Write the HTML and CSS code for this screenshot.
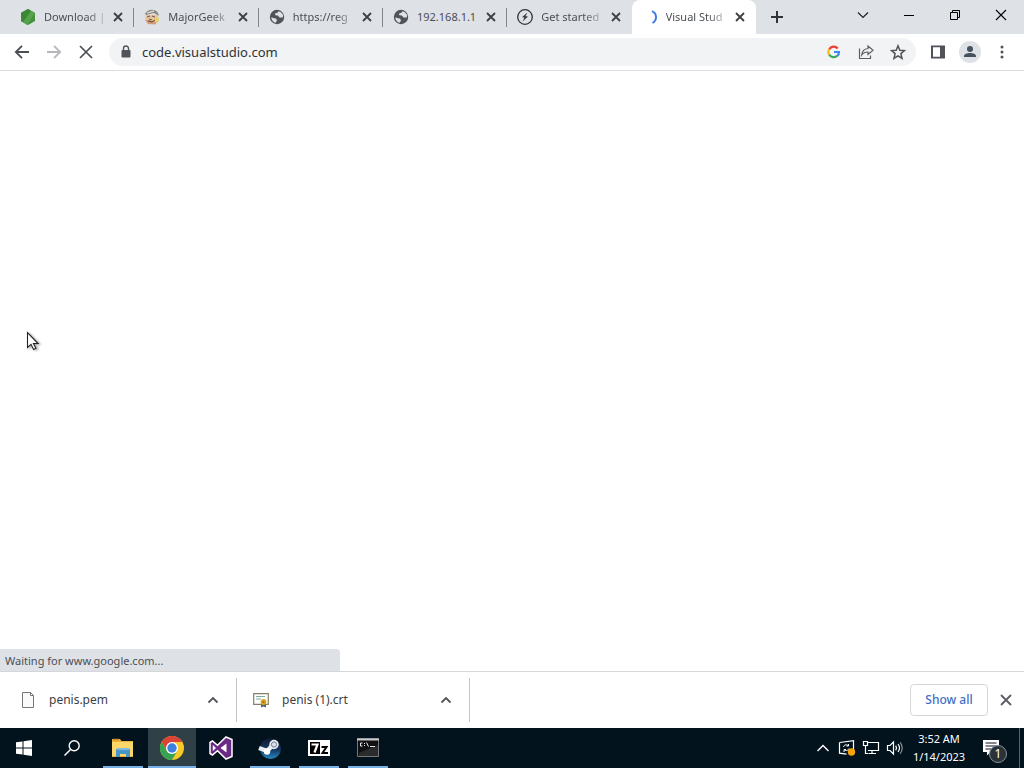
FILE: index.html
```html
<!DOCTYPE html>
<html lang="en">
<head>
<meta charset="utf-8">
<title>Visual Studio Code</title>
<link rel="stylesheet" href="styles.css">
</head>
<body>
<svg class="defs" aria-hidden="true">
  <symbol id="x" viewBox="0 0 14 14"><path d="M3 3l8 8M11 3l-8 8" fill="none" stroke="currentColor" stroke-width="1.800"/></symbol>
  <symbol id="globe" viewBox="0 0 16 16"><circle cx="8" cy="8" r="7.200" fill="#505458"/><path d="M2.300 8.300L5 9.300 7 9.600 8 11.500 6.700 13.700C4.500 13.500 2.400 11.500 2.300 8.300zM9.500 2.300l-1 1.500-2.500.7.300 1.700 2.500.3 1.700 2 3.300-.1.300-2.400C13 4.200 11.500 2.700 9.500 2.300z" fill="#dee1e6"/></symbol>
  <symbol id="up" viewBox="0 0 14 14"><path d="M2.500 9.500L7 5l4.500 4.500" fill="none" stroke="currentColor" stroke-width="1.800"/></symbol>
</svg>
<header class="browser">
  <div class="strip">
    <nav class="tabs" aria-label="Tabs">
      <div class="tab">
        <svg class="icon16" viewBox="0 0 16 16"><path d="M8 0l7 4v8l-7 4-7-4V4z" fill="#43913d"/><path d="M8 0l7 4-8 12-6-4V4z" fill="#55a34a"/><path d="M8 0l3 2-8 11-2-1V4z" fill="#3e8638"/></svg>
        <a class="label" href="#">Download |</a>
        <button class="close" aria-label="Close tab"><svg class="icon14"><use href="#x"/></svg></button>
      </div>
      <div class="tab">
        <svg class="icon16" viewBox="0 0 16 16"><path d="M2 6h11l2 6-4 3H6l-5-5z" fill="#e4c5a0"/><path d="M1 5C3 0 11-1 14 4l1 3-5-3-8 2z" fill="#8a8680"/><path d="M3 4l7-2" stroke="#d5d2cc" stroke-width="1.500"/><path d="M3 8l3-1M8 7l3 1M5 10l3 1" stroke="#765f50" stroke-width="1.200"/><path d="M1 11l3 4 7 .5 3-3-4-1z" fill="#d59a78"/><path d="M9 11l5-3 1.500 2-3 4z" fill="#e7d16c"/><path d="M4 12l4 1 3-2" fill="none" stroke="#694838"/></svg>
        <a class="label" href="#">MajorGeek</a>
        <button class="close" aria-label="Close tab"><svg class="icon14"><use href="#x"/></svg></button>
      </div>
      <div class="tab">
        <svg class="icon16"><use href="#globe"/></svg>
        <a class="label" href="#">https://reg</a>
        <button class="close" aria-label="Close tab"><svg class="icon14"><use href="#x"/></svg></button>
      </div>
      <div class="tab">
        <svg class="icon16"><use href="#globe"/></svg>
        <a class="label crisp" href="#">192.168.1.1</a>
        <button class="close" aria-label="Close tab"><svg class="icon14"><use href="#x"/></svg></button>
      </div>
      <div class="tab bare">
        <svg class="icon16" viewBox="0 0 16 16"><circle cx="8" cy="8" r="7.300" fill="none" stroke="#303438" stroke-width="1.300"/><path d="M10.500 3.500L5 8.300l2.600.2L5.500 12.500l5.500-5-2.600-.2z" fill="#303438"/></svg>
        <a class="label" href="#">Get started</a>
        <button class="close" aria-label="Close tab"><svg class="icon14"><use href="#x"/></svg></button>
      </div>
      <div class="tab active">
        <svg class="icon16" viewBox="0 0 16 16"><path d="M10 2.200C15 4.500 15.500 11 10.500 14" fill="none" stroke="#3d7be8" stroke-width="2"/></svg>
        <a class="label" href="#" aria-current="page">Visual Stud</a>
        <button class="close" aria-label="Close tab"><svg class="icon14"><use href="#x"/></svg></button>
      </div>
    </nav>
    <button class="newtab" aria-label="New tab"><svg class="icon14" viewBox="0 0 14 14"><path d="M7 1v12M1 7h12" stroke="#303338" stroke-width="2"/></svg></button>
    <div class="window">
      <button aria-label="Search tabs"><svg class="icon14" viewBox="0 0 14 14"><path d="M2 4.500l5 5 5-5" fill="none" stroke="#222" stroke-width="1.200"/></svg></button>
      <button aria-label="Minimize"><svg class="icon14" viewBox="0 0 14 14"><path d="M2 7.500h10" stroke="#000"/></svg></button>
      <button aria-label="Restore"><svg class="icon14" viewBox="0 0 14 14"><path d="M2.500 4.500h7v7h-7zM4.500 4V2.500h7v7H10" fill="none" stroke="#000"/></svg></button>
      <button aria-label="Close"><svg class="icon14" viewBox="0 0 14 14"><path d="M2 2l10 10M12 2L2 12" stroke="#000" stroke-width="1.100"/></svg></button>
    </div>
  </div>
  <div class="toolbar">
    <button class="tool" aria-label="Back"><svg class="icon16" viewBox="0 0 16 16"><path d="M15 8H2M8 1.800L1.800 8 8 14.200" fill="none" stroke="#4b4f54" stroke-width="1.800"/></svg></button>
    <button class="tool" aria-label="Forward"><svg class="icon16" viewBox="0 0 16 16"><path d="M1 8h13M8 1.800L14.200 8 8 14.200" fill="none" stroke="#b5b7ba" stroke-width="1.800"/></svg></button>
    <button class="tool" aria-label="Stop"><svg class="icon16" viewBox="0 0 16 16"><path d="M2 2l12 12M14 2L2 14" stroke="#4b4f54" stroke-width="1.700"/></svg></button>
    <div class="omnibox">
      <svg class="icon16" viewBox="0 0 16 16"><path d="M5.500 7V4.500a2.500 2.500 0 015 0V7" fill="none" stroke="#505459" stroke-width="1.400"/><rect x="3.500" y="6" width="9" height="7.500" rx="1" fill="#505459"/></svg>
      <input class="address" type="text" aria-label="Address" value="code.visualstudio.com">
      <button class="tool" aria-label="Search with Google"><svg class="icon14" viewBox="0 0 14 14"><g fill="none" stroke-width="2.200"><path d="M2.200 4.500A5 5 0 0110.700 3.500" stroke="#ea4335"/><path d="M2.200 4.300a5 5 0 000 5.400" stroke="#fbbc05"/><path d="M2.200 9.500a5 5 0 008 1.300" stroke="#34a853"/><path d="M7 7h5A5 5 0 0110.200 11" stroke="#4285f4"/></g></svg></button>
      <button class="tool" aria-label="Share"><svg class="icon16" viewBox="0 0 16 16"><path d="M1.500 4.500v10h11v-3M10 2l5 4.300-5 4.200V8C7 8 5.200 8.800 3.700 11 4 7.500 6.200 4.900 10 4.500z" fill="none" stroke="#5b5f64" stroke-width="1.200"/></svg></button>
      <button class="tool" aria-label="Bookmark"><svg class="icon16" viewBox="0 0 16 16"><path d="M8 1.800l1.800 4.400 4.700.4-3.600 3 1.100 4.700L8 11.800l-4 2.500 1.100-4.700-3.600-3 4.700-.4z" fill="none" stroke="#505459" stroke-width="1.500"/></svg></button>
    </div>
    <button class="tool" aria-label="Side panel"><svg class="icon16" viewBox="0 0 16 16"><path d="M1 1.500h14v13H1zM3 3.300v9.400h7V3.300z" fill="#505459" fill-rule="evenodd"/></svg></button>
    <button class="tool" aria-label="Profile"><svg class="icon22" viewBox="0 0 22 22"><circle cx="11" cy="11" r="11" fill="#dee1e6"/><circle cx="11" cy="8" r="3" fill="#46515e"/><path d="M5 16v-1c0-4 12-4 12 0v1z" fill="#46515e"/></svg></button>
    <button class="tool" aria-label="Menu"><svg class="icon16" viewBox="0 0 16 16"><g fill="#505459"><circle cx="8" cy="3" r="1.500"/><circle cx="8" cy="8" r="1.500"/><circle cx="8" cy="13" r="1.500"/></g></svg></button>
  </div>
</header>
<main class="page">
  <svg class="pointer" viewBox="0 0 14 20" aria-hidden="true"><path d="M1.500 1.500v15l3.500-3.200 2.600 5.200 2.300-1.200-2.500-4.800h4.700z" fill="#fff" stroke="#222" stroke-width="1.100"/></svg>
  <div class="status" role="status">Waiting for www.google.com...</div>
</main>
<section class="shelf" aria-label="Downloads">
  <div class="item">
    <svg class="icon16" viewBox="0 0 16 16"><path d="M2.500.5h8l3 3v12h-11zM10.500.5v3h3" fill="#fafafa" stroke="#777"/></svg>
    <a class="file" href="#">penis.pem</a>
    <button class="more" aria-label="Options for penis.pem"><svg class="icon14"><use href="#up"/></svg></button>
  </div>
  <div class="item">
    <svg class="icon16" viewBox="0 0 16 16"><path d="M.7 1.700h14.600v10.600H.7z" fill="#fff" stroke="#8a7f65" stroke-width="1.200"/><path d="M3 4.500h9M3 7h5" stroke="#7eaaa0"/><path d="M8 11v4.500l2.500-1 2.500 1V11" fill="#536273"/><circle cx="10.500" cy="10" r="2.900" fill="#dda51e"/><circle cx="10.500" cy="10" r="1" fill="#9e6e10"/></svg>
    <a class="file" href="#">penis (1).crt</a>
    <button class="more" aria-label="Options for penis (1).crt"><svg class="icon14"><use href="#up"/></svg></button>
  </div>
  <div class="shelfend">
    <button class="showall">Show all</button>
    <button class="dismiss" aria-label="Close downloads"><svg class="icon16" viewBox="0 0 16 16"><path d="M3 3l10 10M13 3L3 13" stroke="#5a5d61" stroke-width="1.800"/></svg></button>
  </div>
</section>
<footer class="taskbar">
  <div class="system">
    <button class="task" aria-label="Start"><svg class="icon16" viewBox="0 0 16 16"><path d="M0 2.300L6.500 1.400v6.100H0zM7.500 1.200L16 0v7.500H7.500zM0 8.500h6.500v6.100L0 13.700zM7.500 8.500H16V16l-8.500-1.200z" fill="#fff"/></svg></button>
    <button class="task" aria-label="Search"><svg class="icon16" viewBox="0 0 16 16"><circle cx="10.200" cy="5.800" r="5" fill="none" stroke="#fff" stroke-width="1.400"/><path d="M6.500 9.500L.5 15.500" stroke="#fff" stroke-width="1.500"/></svg></button>
  </div>
  <nav class="apps" aria-label="Applications">
    <button class="task open" aria-label="File Explorer"><svg class="icon24" viewBox="0 0 24 24"><path d="M1 3h8l1.500 2H22v16H1z" fill="#e9b23c"/><path d="M1 6h21v14H1z" fill="#fbd769"/><path d="M2 3.500h6" stroke="#c98a25" stroke-width="1.500"/><path d="M5 21v-8h14v8h-4v-3H9v3z" fill="#4a94c8"/><path d="M6 13h12" stroke="#7bbbe0" stroke-width="2"/></svg></button>
    <button class="task open current" aria-label="Google Chrome"><svg class="icon24" viewBox="0 0 24 24"><circle cx="12" cy="12" r="12" fill="#f6c927"/><path d="M1.600 6A12 12 0 0122.400 6H12L7 15z" fill="#dc4337"/><path d="M1.600 6A12 12 0 0012 24l5.200-9-5.200 3-5.200-3z" fill="#35a452"/><circle cx="12" cy="12" r="6" fill="#fff"/><circle cx="12" cy="12" r="4.700" fill="#3e7fe2"/></svg></button>
    <button class="task" aria-label="Visual Studio"><svg class="icon24" viewBox="0 0 24 24"><path d="M17 1l6 2.500v17L17 23 8.500 14.800 3.500 19 1 17.500v-11L3.500 5l5 4.200z" fill="#682a84" stroke="#fff" stroke-width="1.500"/><path d="M3.800 9v6L7 12zM17.500 7.500v9L11.500 12z" fill="#fff"/></svg></button>
    <button class="task open" aria-label="Steam"><svg class="icon24" viewBox="0 0 24 24"><defs><linearGradient id="steam" x2="0" y2="1"><stop stop-color="#10192e"/><stop offset=".55" stop-color="#143762"/><stop offset="1" stop-color="#288ac2"/></linearGradient></defs><circle cx="12.500" cy="12.500" r="10.500" fill="url(#steam)"/><path d="M1 12l8 3 6-6" fill="none" stroke="#e8ecf0" stroke-width="4.500"/><circle cx="16" cy="8.500" r="4.700" fill="#e8ecf0"/><circle cx="16" cy="8.500" r="2.600" fill="#dce2e7" stroke="#6b7d92"/><circle cx="9" cy="15.500" r="3.200" fill="#fff"/></svg></button>
    <button class="task open" aria-label="7-Zip"><svg class="icon24" viewBox="0 0 24 24"><path d="M1 4h22v16H1z" fill="#fff"/><path d="M3 6h10v12H3z" fill="#000"/><path d="M4.500 8.500h6L7.500 16.500" fill="none" stroke="#fff" stroke-width="2.200"/><path d="M14.500 11h5l-4 6h5.500" fill="none" stroke="#000" stroke-width="2"/></svg></button>
    <button class="task open" aria-label="Command Prompt"><svg class="icon24" viewBox="0 0 24 24"><path d="M1.500 2.500h21v18h-21z" fill="#101112" stroke="#777"/><path d="M1 3.500h22" stroke="#c7c9ca" stroke-width="2"/><path d="M3 17L22 9v11H3z" fill="#292b2d"/><path d="M6.500 7H4.500v3h2M8 7.500h1M8 9.500h1M10.500 6.500l2 4M14 10.500h5" fill="none" stroke="#e5e5e5"/></svg></button>
  </nav>
  <div class="tray">
    <button class="tiny" aria-label="Show hidden icons"><svg class="icon16" viewBox="0 0 16 16"><path d="M2.500 11L8 5.500l5.500 5.500" fill="none" stroke="#fff" stroke-width="1.400"/></svg></button>
    <button class="tiny" aria-label="Updates"><svg class="icon18" viewBox="0 0 18 18"><path d="M1.500 3.500l14-1.800v9M1.500 3.500v10.700l7 1" fill="none" stroke="#fff" stroke-width="1.200"/><path d="M5.500 8c.5-2.500 3.500-3 5-1V5M10.500 7H8.500M11 9.500c-1 2.500-3.500 2.500-5 1V13M6 10.500h2" fill="none" stroke="#fff"/><circle cx="13.500" cy="13" r="3.700" fill="#f7a20b"/></svg></button>
    <button class="tiny" aria-label="Network"><svg class="icon18" viewBox="0 0 18 18"><path d="M6 3.500h10.500v8H6M10 11.500v3M7 14.500h7M1.500 2.500h4v4h-4zM3.500 6.500v8h3" fill="none" stroke="#fff" stroke-width="1.200"/></svg></button>
    <button class="tiny" aria-label="Volume"><svg class="icon18" viewBox="0 0 18 18"><path d="M1.500 6.500h2.500L7.500 3v12L4 11.500H1.500zM9.700 6.700q1.600 2.300 0 4.600M12 5q3 4 0 8" fill="none" stroke="#fff" stroke-width="1.200"/><path d="M14.200 3.300q4 5.700 0 11.400" fill="none" stroke="#8a9298" stroke-width="1.200"/></svg></button>
    <button class="clock"><span>3:52 AM</span><span>1/14/2023</span></button>
    <button class="notice" aria-label="Notifications"><svg class="icon18" viewBox="0 0 18 18"><path d="M1 1h16v12H8.500L5 16.500V13H1z" fill="#fff"/><path d="M3.500 4h11M3.500 7h11M3.500 10h7" stroke="#07131c" stroke-width="1.200"/></svg><span class="badge">1</span></button>
    <button class="desktop" aria-label="Show desktop"></button>
  </div>
</footer>
</body>
</html>
```
FILE: styles.css
```css
* { box-sizing: border-box; }
body {
  margin: 0;
  min-height: 100vh;
  display: flex;
  flex-direction: column;
  background: #fff;
  color: #3c4043;
  font: 12px/18px "Noto Sans", "Open Sans", sans-serif;
}
button {
  padding: 0;
  border: 0;
  background: none;
  color: inherit;
  font: inherit;
  display: flex;
  align-items: center;
  justify-content: center;
}
a { color: inherit; text-decoration: none; }
svg { display: block; flex: none; }
.defs { position: absolute; width: 0; height: 0; }
.icon14 { width: 14px; height: 14px; }
.icon16 { width: 16px; height: 16px; }
.icon18 { width: 18px; height: 18px; }
.icon22 { width: 22px; height: 22px; }
.icon24 { width: 24px; height: 24px; }

.strip {
  display: flex;
  height: 34px;
  padding-left: 10px;
  background: #dee1e6;
}
.tabs { display: flex; flex: 0 1 746px; }
.tab {
  display: flex;
  flex: 1;
  align-items: center;
  min-width: 0;
  padding: 0 9px 0 10px;
  background: linear-gradient(#80868b, #80868b) right center / 1px 19px no-repeat;
}
.tab.bare { background: none; }
.tab.active {
  background: #fff;
  border-radius: 8px 8px 0 0;
}
.label {
  flex: 1;
  min-width: 0;
  margin: 0 4px 0 8px;
  overflow: hidden;
  white-space: nowrap;
  font-size: 11px;
  color: #4b4f54;
  -webkit-mask-image: linear-gradient(90deg, #000 42px, #0004 60px);
  mask-image: linear-gradient(90deg, #000 42px, #0004 60px);
}
.label.crisp { -webkit-mask-image: none; mask-image: none; }
.close { color: #3c4043; }
.newtab { width: 42px; }
.window { display: flex; margin-left: auto; height: 29px; }
.window button { width: 46px; }

.toolbar {
  display: flex;
  align-items: center;
  height: 37px;
  padding: 0 6px;
  border-bottom: 1px solid #dcdde0;
}
.tool { flex: none; width: 32px; height: 28px; }
.omnibox {
  flex: 1;
  display: flex;
  align-items: center;
  height: 28px;
  margin: 0 6px 0 7px;
  padding: 0 2px 0 9px;
  border-radius: 14px;
  background: #f1f3f4;
}
.address {
  flex: 1;
  min-width: 0;
  padding: 0 8px;
  border: 0;
  outline: 0;
  background: none;
  color: #303236;
  font: 13px/18px "Noto Sans", "Open Sans", sans-serif;
}

.page { position: relative; flex: 1; display: flex; align-items: flex-end; }
.pointer { position: absolute; left: 26px; top: 260px; width: 14px; height: 20px; filter: drop-shadow(2px 1px 1px #0005); }
.status {
  width: 340px;
  height: 22px;
  padding: 0 5px;
  line-height: 23px;
  font-size: 11px;
  background: #dee1e6;
  color: #4b4f54;
  border-radius: 0 4px 0 0;
}
.shelf {
  display: flex;
  align-items: center;
  height: 57px;
  border-top: 1px solid #d5d7da;
}
.item {
  display: flex;
  align-items: center;
  width: 233px;
  height: 44px;
  padding: 0 16px;
  border-right: 1px solid #c4c6c9;
}
.item:first-child { width: 237px; padding-left: 20px; }
.file { flex: 1; padding-left: 13px; }
.more { width: 15px; color: #505459; }
.shelfend { display: flex; align-items: center; margin-left: auto; padding-right: 10px; gap: 10px; }
.showall {
  width: 78px;
  height: 32px;
  border: 1px solid #d4d6da;
  border-radius: 4px;
  color: #3f6fc6;
  font-weight: 500;
}

.taskbar { display: flex; height: 40px; background: #03131d; color: #fff; }
.system { display: flex; margin-right: 3px; }
.apps { display: flex; gap: 1px; }
.task { width: 48px; height: 40px; }
.open { background: linear-gradient(#76b0e6, #76b0e6) center bottom / 40px 2px no-repeat; }
.current { background-color: #304047; background-size: 48px 2px; }
.tray { display: flex; margin-left: auto; }
.tiny { width: 24px; }
.clock { width: 64px; flex-direction: column; white-space: nowrap; font-size: 11px; }
.notice { position: relative; width: 48px; padding-right: 8px; }
.badge {
  position: absolute;
  left: 18px;
  top: 17px;
  width: 18px;
  height: 18px;
  border: 1px solid #8b9298;
  border-radius: 50%;
  background: #293239;
  font-size: 12px;
  line-height: 16px;
  text-align: center;
}
.desktop { width: 5px; border-left: 1px solid #59636a; }
```
